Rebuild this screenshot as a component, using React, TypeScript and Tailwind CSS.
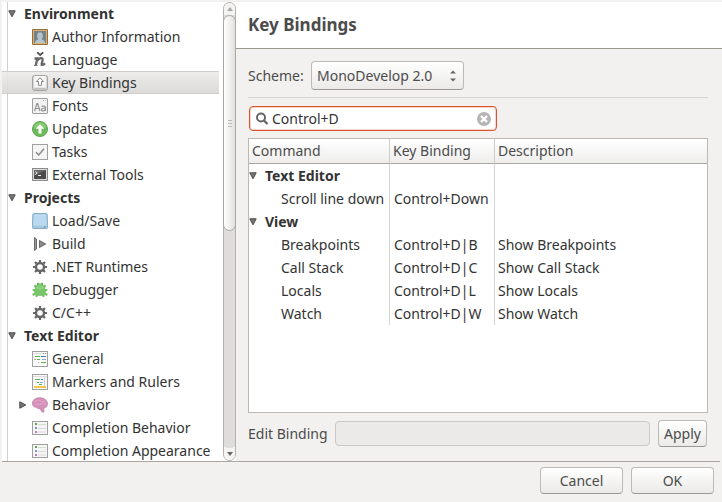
import { useState } from "react";
import type { ReactNode } from "react";

function Icon({ children }: { children: ReactNode }) {
  return (
    <svg viewBox="0 0 16 16" className="size-4 shrink-0" aria-hidden="true">
      {children}
    </svg>
  );
}

const AuthorIcon = () => (
  <Icon>
    <rect width="16" height="16" rx="1" fill="#94713f" />
    <rect x="1" y="1" width="14" height="14" fill="#dcae6a" />
    <rect x="2" y="2" width="12" height="12" fill="#76838a" />
    <path d="M3 14c0-2 1-3 3-3.300V9.500C4.500 8 4.800 3.200 8 3.200S11.500 8 10 9.500v1.200c2 .3 3 1.300 3 3.300z" fill="#b3c5ca" />
  </Icon>
);

const LanguageIcon = () => (
  <Icon>
    <path d="M5.200.3 8.200 3 11.200.3" fill="none" stroke="#4f4f4f" strokeWidth="1.800" />
    <path d="M2.500 6.500H5.300L3.800 13.500M5 9C7 5.800 11.200 5 10.600 8L9.700 11.800c-.2 1.500 1.800 1.200 3.300-.6" fill="none" stroke="#666" strokeWidth="2.300" />
    <path d="M2 13.500h3.500M8.500 13.500h3.500" stroke="#777" />
  </Icon>
);

const KeyIcon = () => (
  <Icon>
    <rect x=".5" y=".5" width="15" height="15" rx="2" fill="#d6d6d6" stroke="#a3a3a3" />
    <rect x="2" y="1" width="12" height="12" rx="1.500" fill="#f4f4f4" />
    <path d="M1 15 3 13h10l2 2" fill="#c4c4c4" stroke="#b5b5b5" strokeWidth=".5" />
    <path d="M8 2.800 11.600 6.500H9.500v3.800h-3V6.500H4.400z" fill="#fff" stroke="#888" />
  </Icon>
);

const FontsIcon = () => (
  <Icon>
    <rect x=".5" y=".5" width="15" height="15" rx=".5" fill="#f2f2f2" stroke="#a0a0a0" />
    <path d="M11 2.500h1M13 2.500h1" stroke="#bbb" />
    <path d="M2.500 13 5 5.500h.6L8 13M3.500 10.500h3.700M9.500 8.500c4-1 4 .5 4 1.500v3M13.500 10c-2.500 0-4 .3-4 1.800 0 1.700 3 1.500 4-.5" fill="none" stroke="#939393" strokeWidth="1.200" />
  </Icon>
);

const UpdatesIcon = () => (
  <Icon>
    <circle cx="8" cy="8" r="7.500" fill="#6dbb5d" stroke="#59a74b" />
    <path d="M2 7a6 5.500 0 0 1 12 0z" fill="#84cc74" />
    <path d="M8 3.300 12.300 7.800H9.500v4.700h-3V7.800H3.700z" fill="#fff" />
  </Icon>
);

const TasksIcon = () => (
  <Icon>
    <rect x=".5" y=".5" width="15" height="15" fill="#f5f5f5" stroke="#a0a0a0" />
    <path d="m4 8.300 2.700 2.700L12 4.800" fill="none" stroke="#8a8a8a" strokeWidth="1.500" />
  </Icon>
);

const TerminalIcon = () => (
  <Icon>
    <rect x=".5" y="1.500" width="15" height="12" fill="#ddd" stroke="#8c8c8c" />
    <rect x="2" y="3" width="12" height="9" fill="#4b4b4b" />
    <path d="M2 3h12L2 9z" fill="#686868" />
    <path d="m3.300 4.500 2 1.500-2 1.500M6 8.500h3" fill="none" stroke="#eee" />
  </Icon>
);

const DriveIcon = () => (
  <Icon>
    <path d="M2 .5h12q1 0 1.200 1l.3 11v2q0 1-1 1h-13q-1 0-1-1v-2l.3-11q.2-1 1.200-1z" fill="#a5c8e1" stroke="#86abc5" />
    <path d="M2 1.200h12l.8 11.300H1.200z" fill="#bbdaef" />
    <path d="M12 14h1.500" stroke="#52748c" />
  </Icon>
);

const BuildIcon = () => (
  <Icon>
    <path d="M2.500 1.500 4.500 3v10l-2 1.500z" fill="#999" stroke="#6c6c6c" />
    <path d="m7 3.800 7.500 4.200L7 12.200z" fill="#6c6c6c" />
    <path d="M8 5.800 12 8l-4 2.200z" fill="#8f8f8f" />
  </Icon>
);

const GearIcon = () => (
  <Icon>
    <g fill="none" stroke="#666" strokeWidth="2.200">
      <path d="M8 1v3M8 12v3M1 8h3M12 8h3M3 3l2.200 2.200M10.800 10.800 13 13M13 3l-2.200 2.200M5.200 10.800 3 13" />
    </g>
    <circle cx="8" cy="8" r="4" fill="#fff" stroke="#666" strokeWidth="2.400" />
  </Icon>
);

const BugIcon = () => (
  <Icon>
    <g fill="none" stroke="#76bd67" strokeWidth="2.400" strokeLinecap="round">
      <path d="M5 6.500 3.200 4M11 6.500 12.800 4M4.500 9 1.800 8M11.500 9l2.700-1M4.500 10.500 1.600 12.500M11.500 10.500l2.900 2M6 11.500l-1.500 2.300M10 11.500l1.500 2.300" />
    </g>
    <ellipse cx="8" cy="9" rx="5.600" ry="5" fill="#78c468" />
    <ellipse cx="8" cy="4.800" rx="4" ry="3.400" fill="#82cb73" />
    <path d="M5 5.500q3 2 6 0" fill="none" stroke="#98d88a" />
    <circle cx="6" cy="2" r="1.200" fill="#68af5a" />
    <circle cx="10" cy="2" r="1.200" fill="#68af5a" />
  </Icon>
);

const GeneralIcon = () => (
  <Icon>
    <rect x=".5" y=".5" width="15" height="15" fill="#fafafa" stroke="#a0a0a0" />
    <path d="M1 2.500h14" stroke="#ddd" />
    <path d="M11 2.500h1M13 2.500h1" stroke="#999" />
    <path d="M3 5.500h5M5 8.500h3M9 11.500h3" stroke="#59b943" />
    <path d="M9 5.500h5" stroke="#318bb2" />
    <path d="M10 8.500h4" stroke="#8ca9df" />
    <path d="M2 8.500h2M6 11.500h1" stroke="#aaa" />
    <path d="M12 11.500h2" stroke="#59b943" />
  </Icon>
);

const MarkersIcon = () => (
  <Icon>
    <rect x=".5" y=".5" width="15" height="15" fill="#fafafa" stroke="#a0a0a0" />
    <path d="M1 2.500h14" stroke="#ddd" />
    <path d="M3 5.500h5M5 8.500h2M7 10.500h3" stroke="#59b943" />
    <path d="M9 5.500h2" stroke="#318bb2" />
    <path d="M8 8.500h3" stroke="#8ca9df" />
    <path d="M12.500 3v10" stroke="#ccc" />
    <path d="M2 13h12" stroke="#f6c64d" strokeWidth="2" />
  </Icon>
);

const BrainIcon = () => (
  <Icon>
    <path d="M.5 7C0 3.500 3 .8 7.500.8c5 0 8 2.700 8 6 0 2.500-1.500 4-3.800 4.300l.3 4h-1.800L8 11.700c-2 .2-3-.4-3.500-1.400C2.300 10.500.7 9 .5 7z" fill="#d490b8" stroke="#c084a8" strokeWidth=".8" />
    <path d="M2.500 5.500c2-2.500 4-2.500 6-1.500s4 0 5 1M3 8c2-1.500 4 .5 6-1s3.500.5 5 0" fill="none" stroke="#e3a9cc" />
  </Icon>
);

const ListIcon = () => (
  <Icon>
    <rect x=".5" y="1.500" width="15" height="13" fill="#f5f5f5" stroke="#a0a0a0" />
    <path d="M6 4.500h8M6 8.500h8M6 12h8" stroke="#d9d9d9" />
    <path d="M3 4h2" stroke="#57aa45" strokeWidth="2" />
    <path d="M3 8h2" stroke="#6f9bd9" strokeWidth="2" />
    <path d="M3 12h2" stroke="#bd77c8" strokeWidth="2" />
  </Icon>
);

function Expander({ open = true }: { open?: boolean }) {
  return (
    <svg viewBox="0 0 8 8" className="size-2 shrink-0" aria-hidden="true">
      <path d={open ? "M.8 .8h6.400L4 6.800z" : "M.8.8v6.400L6.800 4z"} fill="#777" stroke="#4a4a4a" />
    </svg>
  );
}

type Page = { name: string; icon: () => ReactNode; nested?: boolean };

const sections: { title: string; pages: Page[] }[] = [
  {
    title: "Environment",
    pages: [
      { name: "Author Information", icon: AuthorIcon },
      { name: "Language", icon: LanguageIcon },
      { name: "Key Bindings", icon: KeyIcon },
      { name: "Fonts", icon: FontsIcon },
      { name: "Updates", icon: UpdatesIcon },
      { name: "Tasks", icon: TasksIcon },
      { name: "External Tools", icon: TerminalIcon },
    ],
  },
  {
    title: "Projects",
    pages: [
      { name: "Load/Save", icon: DriveIcon },
      { name: "Build", icon: BuildIcon },
      { name: ".NET Runtimes", icon: GearIcon },
      { name: "Debugger", icon: BugIcon },
      { name: "C/C++", icon: GearIcon },
    ],
  },
  {
    title: "Text Editor",
    pages: [
      { name: "General", icon: GeneralIcon },
      { name: "Markers and Rulers", icon: MarkersIcon },
      { name: "Behavior", icon: BrainIcon, nested: true },
      { name: "Completion Behavior", icon: ListIcon },
      { name: "Completion Appearance", icon: ListIcon },
    ],
  },
];

const groups = [
  { title: "Text Editor", rows: [["Scroll line down", "Control+Down", ""]] },
  {
    title: "View",
    rows: [
      ["Breakpoints", "Control+D|B", "Show Breakpoints"],
      ["Call Stack", "Control+D|C", "Show Call Stack"],
      ["Locals", "Control+D|L", "Show Locals"],
      ["Watch", "Control+D|W", "Show Watch"],
    ],
  },
];

const buttonStyle =
  "h-[27px] rounded border border-[#bdbab6] border-b-[#9c9995] bg-linear-to-b from-white to-[#ebeae8] text-center text-[#4c4c4c]";

function Sidebar() {
  const [selected, setSelected] = useState("Key Bindings");
  return (
    <nav aria-label="Preferences" className="flex w-[234px] shrink-0 bg-white">
      <div className="flex min-w-0 flex-1 overflow-hidden bg-[linear-gradient(#d0d0d0,#d0d0d0)] bg-[length:1px_100%] bg-[position:5px_0] bg-no-repeat">
        <ul className="w-[217px]">
          {sections.map((section) => (
            <li key={section.title}>
              <button className="flex h-[23px] w-full items-center gap-2 pl-[6px] text-left font-bold whitespace-nowrap">
                <Expander />
                {section.title}
              </button>
              <ul>
                {section.pages.map((page) => (
                  <li key={page.name}>
                    <button
                      onClick={() => setSelected(page.name)}
                      className={
                        "flex h-[23px] w-full items-center gap-1 text-left whitespace-nowrap " +
                        (page.nested ? "pl-[17px] " : "pl-[30px] ") +
                        (selected === page.name
                          ? "border-y border-y-[#d0cdca] bg-linear-to-b from-[#ebeae9]/90 to-[#d9d7d5]/90"
                          : "")
                      }
                    >
                      {page.nested && (
                        <span className="w-[9px]">
                          <Expander open={false} />
                        </span>
                      )}
                      {page.icon()}
                      {page.name}
                    </button>
                  </li>
                ))}
              </ul>
            </li>
          ))}
        </ul>
      </div>
      <div className="flex w-[13px] flex-col rounded-full border border-[#b5b2ae] bg-[#dedddb]" aria-hidden="true">
        <div className="flex h-3 items-center justify-center rounded-t-full bg-[#f4f4f3]">
          <svg viewBox="0 0 6 4" className="h-1 w-[6px]"><path d="M0 4h6L3 0z" fill="#aaa" /></svg>
        </div>
        <div className="-mx-px flex h-[216px] flex-col items-center justify-center gap-[2px] rounded-full border border-[#aaa7a3] bg-linear-to-r from-white to-[#e2e1df]">
          <span className="h-px w-1 bg-[#bbb]" />
          <span className="h-px w-1 bg-[#bbb]" />
          <span className="h-px w-1 bg-[#bbb]" />
        </div>
        <div className="-mb-3 flex-1 rounded-b-full" />
        <div className="flex h-6 items-end justify-center rounded-b-full bg-[radial-gradient(circle_at_50%_0,#dedddb_12px,#f4f4f3_12px)] pb-1">
          <svg viewBox="0 0 6 4" className="h-1 w-[6px]"><path d="M0 0h6L3 4z" fill="#666" /></svg>
        </div>
      </div>
    </nav>
  );
}

function BindingsTable() {
  return (
    <div className="min-h-0 flex-1 overflow-hidden border border-[#bcb9b5] bg-white">
      <table className="w-full table-fixed border-separate border-spacing-0 text-left whitespace-nowrap">
        <colgroup>
          <col className="w-[141px]" />
          <col className="w-[105px]" />
          <col />
        </colgroup>
        <thead>
          <tr className="h-[25px] bg-linear-to-b from-white to-[#eeedec] text-[#4c4c4c]">
            <th className="border-r border-b border-r-[#cfcdca] border-b-[#a9a7a4] p-0 pl-[3px] font-normal">Command</th>
            <th className="border-r border-b border-r-[#cfcdca] border-b-[#a9a7a4] p-0 pl-[3px] font-normal">Key Binding</th>
            <th className="border-b border-b-[#a9a7a4] p-0 pl-[3px] font-normal">Description</th>
          </tr>
        </thead>
        {groups.map((group) => (
          <tbody key={group.title}>
            <tr className="h-[23px]">
              <th className="border-r border-[#d6d5d3] p-0 font-bold">
                <button className="flex items-center gap-2">
                  <Expander />
                  {group.title}
                </button>
              </th>
              <td className="border-r border-[#d6d5d3] p-0" />
              <td className="p-0" />
            </tr>
            {group.rows.map(([command, binding, description]) => (
              <tr key={command} className="h-[23px]">
                <td className="border-r border-[#d6d5d3] p-0 pl-8">{command}</td>
                <td className="border-r border-[#d6d5d3] p-0 pl-1">{binding}</td>
                <td className="p-0 pl-[3px]">{description}</td>
              </tr>
            ))}
          </tbody>
        ))}
      </table>
    </div>
  );
}

export default function App() {
  const [query, setQuery] = useState("Control+D");
  return (
    <div className="flex h-screen flex-col bg-[#f2f1ef] pt-[2px] pl-[2px] font-['Noto_Sans',sans-serif] text-[14px] leading-[20px] text-[#333]">
      <div className="flex min-h-0 flex-1">
        <Sidebar />
        <main className="flex min-w-0 flex-1 flex-col">
          <h1 className="flex h-[47px] shrink-0 items-center border-b border-[#9b9a8f] bg-white pl-3 text-[17px] font-bold text-[#4c4c4c]">
            Key Bindings
          </h1>
          <div className="flex min-h-0 flex-1 flex-col pt-3 pr-[14px] pb-[14px] pl-3">
            <div className="flex items-center gap-2 border-b border-[#d8d6d3] pb-[7px] text-[#4c4c4c]">
              <label htmlFor="scheme" className="w-[55px] whitespace-nowrap">Scheme:</label>
              <div className="relative">
                <select id="scheme" className="h-[29px] w-[153px] appearance-none rounded border border-[#bdbab6] border-b-[#9c9995] bg-linear-to-b from-white to-[#ebeae8] pl-[5px]">
                  <option>MonoDevelop 2.0</option>
                </select>
                <svg viewBox="0 0 6 12" className="pointer-events-none absolute top-[9px] right-2 h-3 w-[6px]" aria-hidden="true">
                  <path d="M0 3.500h6L3 .5zM0 8.500h6l-3 3z" fill="#666" />
                </svg>
              </div>
            </div>
            <div className="mt-2 ml-px flex h-[25px] w-[248px] shrink-0 items-center gap-[3px] rounded border border-[#d9542b] bg-white px-[5px] shadow-[inset_0_0_0_1px_#f9d5c9]">
              <svg viewBox="0 0 14 14" className="size-[14px] shrink-0" aria-hidden="true">
                <circle cx="6" cy="5.500" r="4" fill="none" stroke="#666" strokeWidth="2" />
                <path d="m9 8.500 3.500 3.500" stroke="#666" strokeWidth="2.400" />
              </svg>
              <input
                aria-label="Search key bindings"
                value={query}
                onChange={(event) => setQuery(event.target.value)}
                className="h-5 min-w-0 flex-1 bg-transparent outline-none"
              />
              <button aria-label="Clear search" onClick={() => setQuery("")}>
                <svg viewBox="0 0 14 14" className="size-[14px]" aria-hidden="true">
                  <circle cx="7" cy="7" r="7" fill="#b5b5b5" />
                  <path d="m4 4 6 6M10 4l-6 6" stroke="#fff" strokeWidth="2.400" />
                </svg>
              </button>
            </div>
            <div className="h-[7px] shrink-0" />
            <BindingsTable />
            <div className="mt-[7px] flex shrink-0 items-center gap-2 pr-px text-[#4c4c4c]">
              <label htmlFor="edit-binding" className="w-[79px] whitespace-nowrap">Edit Binding</label>
              <input id="edit-binding" disabled className="h-[25px] min-w-0 flex-1 rounded border border-[#cbc9c6] bg-[#ebeae8] px-1" />
              <button className={buttonStyle + " w-[49px]"}>Apply</button>
            </div>
          </div>
        </main>
      </div>
      <footer className="mr-[2px] flex h-[41px] shrink-0 justify-end gap-2 border-t border-[#aaa7a3] pt-[5px] pr-[6px] text-[#4c4c4c]">
        <button className={buttonStyle + " w-[83px]"}>Cancel</button>
        <button className={buttonStyle + " w-[83px]"}>OK</button>
      </footer>
    </div>
  );
}
